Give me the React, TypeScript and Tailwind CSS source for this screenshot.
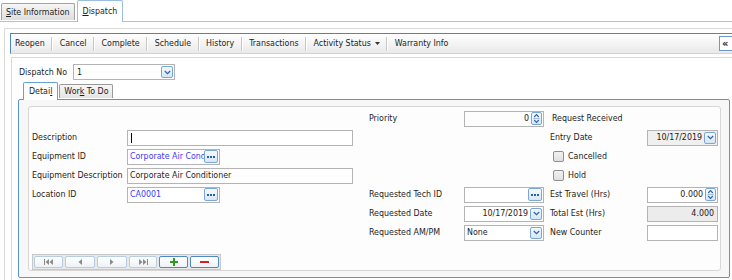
import React from 'react';

const Chevron = () => (
  <svg width="7" height="5" viewBox="0 0 7 5">
    <path d="M0.8 1 L3.5 3.7 L6.2 1" stroke="#2a63a8" strokeWidth="1.2" fill="none" />
  </svg>
);

const DropBtn = () => (
  <div className="w-[12px] h-[12px] shrink-0 rounded-[2px] border border-[#7aa7d6] bg-gradient-to-b from-[#f4f8fc] to-[#d6e6f6] flex items-center justify-center">
    <Chevron />
  </div>
);

const EllBtn = () => (
  <div className="w-[14px] h-[13px] shrink-0 rounded-[2px] border border-[#7aa7d6] bg-gradient-to-b from-[#f6f9fd] to-[#d8e7f7] flex items-center justify-center gap-[1px]">
    <span className="w-[2px] h-[2px] bg-[#2b5fa6]" />
    <span className="w-[2px] h-[2px] bg-[#2b5fa6]" />
    <span className="w-[2px] h-[2px] bg-[#2b5fa6]" />
  </div>
);

const SpinBtn = () => (
  <div className="w-[11px] h-[13px] shrink-0 rounded-[2px] border border-[#7aa7d6] bg-gradient-to-b from-[#f6f9fd] to-[#d8e7f7] flex flex-col items-center justify-center">
    <svg width="7" height="11" viewBox="0 0 7 11">
      <path d="M1.2 4 L3.5 1.6 L5.8 4" stroke="#2a63a8" strokeWidth="1.1" fill="none" />
      <path d="M0.5 5.5 H6.5" stroke="#9dbbe0" strokeWidth="1" />
      <path d="M1.2 7 L3.5 9.4 L5.8 7" stroke="#2a63a8" strokeWidth="1.1" fill="none" />
    </svg>
  </div>
);

const Box = ({
  className = '',
  children,
}: {
  className?: string;
  children?: React.ReactNode;
}) => (
  <div
    className={`h-[16px] self-center border border-[#b4b4b4] flex items-center pl-[2px] pr-[1px] overflow-hidden whitespace-nowrap ${className}`}
  >
    {children}
  </div>
);

const Label = ({ className = '', children }: { className?: string; children: React.ReactNode }) => (
  <div className={`self-center whitespace-nowrap ${className}`}>{children}</div>
);

const Check = ({ label, row }: { label: string; row: string }) => (
  <div className={`col-start-7 col-span-2 ${row} self-center flex items-center gap-[4px] ml-[3px]`}>
    <div className="w-[11px] h-[11px] rounded-[2px] border border-[#8f8f8f] bg-gradient-to-b from-[#f2f2f2] to-[#e0e0e0]" />
    <span>{label}</span>
  </div>
);

const NavIcon = ({ kind }: { kind: 'first' | 'prev' | 'next' | 'last' }) => {
  const c = '#8a8a8a';
  if (kind === 'first')
    return (
      <svg width="9" height="6" viewBox="0 0 9 6">
        <rect x="0" y="0" width="1" height="6" fill={c} />
        <path d="M5 0 L5 6 L1.5 3 Z" fill={c} />
        <path d="M9 0 L9 6 L5.5 3 Z" fill={c} />
      </svg>
    );
  if (kind === 'last')
    return (
      <svg width="9" height="6" viewBox="0 0 9 6">
        <path d="M0 0 L0 6 L3.5 3 Z" fill={c} />
        <path d="M4 0 L4 6 L7.5 3 Z" fill={c} />
        <rect x="8" y="0" width="1" height="6" fill={c} />
      </svg>
    );
  if (kind === 'prev')
    return (
      <svg width="4" height="6" viewBox="0 0 4 6">
        <path d="M4 0 L4 6 L0.5 3 Z" fill={c} />
      </svg>
    );
  return (
    <svg width="4" height="6" viewBox="0 0 4 6">
      <path d="M0 0 L0 6 L3.5 3 Z" fill={c} />
    </svg>
  );
};

const NavBtn = ({ children, strong = false }: { children: React.ReactNode; strong?: boolean }) => (
  <div
    className={`h-[12px] rounded-[2px] border flex items-center justify-center bg-gradient-to-b from-white to-[#eef2f6] ${
      strong ? 'border-[#4f88c2]' : 'border-[#b6cde4]'
    }`}
  >
    {children}
  </div>
);

const Sep = () => <div className="w-[2px] h-[14px] border-l border-[#c8c8c8] border-r border-r-white mx-[6.5px]" />;

export default function App() {
  const toolbar = ['Reopen', 'Cancel', 'Complete', 'Schedule', 'History', 'Transactions'];

  return (
    <div className="w-[732px] h-[280px] overflow-hidden bg-white text-[8.8px] leading-none text-[#1c1c1c] font-['DejaVu_Sans_Condensed','Liberation_Sans',Arial,sans-serif]">
      {/* top tabs */}
      <div className="flex items-end h-[22px] border-b border-[#a9c4e2] pl-[1px]">
        <div className="h-[17px] mb-px px-[4px] border border-b-0 border-[#a3a3a3] rounded-t-[2px] bg-gradient-to-b from-[#f6f6f6] to-[#dedede] flex items-center">
          <span>
            <span className="underline">S</span>ite Information
          </span>
        </div>
        <div className="relative -mb-px ml-[2px] h-[22px] px-[5px] border border-b-0 border-[#9dbde0] rounded-t-[2px] bg-white flex items-center">
          <span>
            <span className="underline">D</span>ispatch
          </span>
        </div>
      </div>

      {/* outer panel */}
      <div className="mt-[6px] ml-[4px] border-l border-t border-[#d9d9d9] h-[252px]">
        {/* toolbar */}
        <div className="mt-[4px] ml-[5px] h-[21px] border-t border-l border-[#4a86c5] border-b border-b-[#d4d4d4] bg-gradient-to-b from-white to-[#e9e9e9] flex items-center pl-[4px]">
          {toolbar.map((t) => (
            <React.Fragment key={t}>
              <span>{t}</span>
              <Sep />
            </React.Fragment>
          ))}
          <span>Activity Status</span>
          <svg width="5" height="3" viewBox="0 0 5 3" className="ml-[4px]">
            <path d="M0 0 H5 L2.5 3 Z" fill="#333" />
          </svg>
          <Sep />
          <span>Warranty Info</span>
          <div className="ml-auto h-[15px] w-[13px] border border-r-0 border-[#6f97c4] bg-white flex items-center pl-[2px] font-bold text-[11px]">
            «
          </div>
        </div>

        {/* inner panel */}
        <div className="mt-[3px] ml-[6px] border-l border-t border-[#d9d9d9] h-[230px]">
          <div className="flex items-center mt-[6px] pl-[7px] h-[16px]">
            <div className="w-[54px]">Dispatch No</div>
            <div className="w-[102px] h-[16px] border border-[#b4b4b4] flex items-center pl-[3px] pr-[1px]">
              <span className="flex-1">1</span>
              <DropBtn />
            </div>
          </div>

          {/* sub tabs */}
          <div className="mt-[2px] ml-[11px] h-[17px] flex items-end">
            <div className="relative z-10 -mb-px h-[18px] px-[5px] border border-b-0 border-[#6a9fd4] rounded-t-[2px] bg-white flex items-center">
              <span>
                Detai<span className="underline">l</span>
              </span>
            </div>
            <div className="ml-px h-[14px] mb-px px-[4px] border border-b-0 border-[#9a9a9a] rounded-t-[2px] bg-gradient-to-b from-[#f7f7f7] to-[#e4e4e4] flex items-center">
              <span>
                Wor<span className="underline">k</span> To Do
              </span>
            </div>
          </div>

          {/* tab content */}
          <div className="ml-[6px] mr-[2px] h-[179px] border border-[#5b95cf] rounded-[2px] bg-[#f7f7f7] pt-[6px] pl-[9px] pr-[8px]">
            <div className="h-[165px] border border-[#d6d6d6] rounded-[3px] bg-[#fdfdfd] pt-[2px] pl-[3px]">
              <div className="grid grid-cols-[95px_226px_16px_95px_80px_6px_97px_71px] grid-rows-[repeat(7,19px)]">
                {/* row 1 */}
                <Label className="col-start-4 row-start-1">Priority</Label>
                <Box className="col-start-5 row-start-1 justify-end">
                  <span className="mr-[2px]">0</span>
                  <SpinBtn />
                </Box>
                <Label className="col-start-7 col-span-2 row-start-1 ml-[2px]">Request Received</Label>

                {/* row 2 */}
                <Label className="col-start-1 row-start-2">Description</Label>
                <Box className="col-start-2 row-start-2 bg-white">
                  <span className="ml-px w-px h-[10px] bg-black" />
                </Box>
                <Label className="col-start-7 row-start-2">Entry Date</Label>
                <Box className="col-start-8 row-start-2 bg-[#f0f0f0] justify-end">
                  <span className="mr-[2px]">10/17/2019</span>
                  <DropBtn />
                </Box>

                {/* row 3 */}
                <Label className="col-start-1 row-start-3">Equipment ID</Label>
                <Box className="col-start-2 row-start-3 w-[93px] bg-white">
                  <span className="flex-1 overflow-hidden text-[#3b3bf0]">Corporate Air Conditioner</span>
                  <EllBtn />
                </Box>
                <Check label="Cancelled" row="row-start-3" />

                {/* row 4 */}
                <Label className="col-start-1 row-start-4">Equipment Description</Label>
                <Box className="col-start-2 row-start-4 bg-white">Corporate Air Conditioner</Box>
                <Check label="Hold" row="row-start-4" />

                {/* row 5 */}
                <Label className="col-start-1 row-start-5">Location ID</Label>
                <Box className="col-start-2 row-start-5 w-[93px] bg-white">
                  <span className="flex-1 text-[#3b3bf0]">CA0001</span>
                  <EllBtn />
                </Box>
                <Label className="col-start-4 row-start-5">Requested Tech ID</Label>
                <Box className="col-start-5 row-start-5 bg-white justify-end">
                  <EllBtn />
                </Box>
                <Label className="col-start-7 row-start-5">Est Travel (Hrs)</Label>
                <Box className="col-start-8 row-start-5 bg-white justify-end">
                  <span className="mr-[2px]">0.000</span>
                  <SpinBtn />
                </Box>

                {/* row 6 */}
                <Label className="col-start-4 row-start-6">Requested Date</Label>
                <Box className="col-start-5 row-start-6 bg-white justify-end">
                  <span className="mr-[2px]">10/17/2019</span>
                  <DropBtn />
                </Box>
                <Label className="col-start-7 row-start-6">Total Est (Hrs)</Label>
                <Box className="col-start-8 row-start-6 bg-[#ececec] justify-end">
                  <span className="mr-[2px]">4.000</span>
                </Box>

                {/* row 7 */}
                <Label className="col-start-4 row-start-7">Requested AM/PM</Label>
                <Box className="col-start-5 row-start-7 bg-white">
                  <span className="flex-1">None</span>
                  <DropBtn />
                </Box>
                <Label className="col-start-7 row-start-7">New Counter</Label>
                <Box className="col-start-8 row-start-7 bg-white" />
              </div>

              {/* navigator */}
              <div className="mt-[12px] w-[189px] h-[16px] border border-[#c8c8c8] bg-[#e9e9e9] grid grid-cols-[29px_30px_30px_28px_29px_29px] gap-[2px] items-center pl-px">
                <NavBtn>
                  <NavIcon kind="first" />
                </NavBtn>
                <NavBtn>
                  <NavIcon kind="prev" />
                </NavBtn>
                <NavBtn>
                  <NavIcon kind="next" />
                </NavBtn>
                <NavBtn>
                  <NavIcon kind="last" />
                </NavBtn>
                <NavBtn strong>
                  <svg width="8" height="8" viewBox="0 0 8 8">
                    <rect x="3" y="0" width="2" height="8" fill="#2f9a1f" />
                    <rect x="0" y="3" width="8" height="2" fill="#2f9a1f" />
                  </svg>
                </NavBtn>
                <NavBtn strong>
                  <svg width="9" height="2" viewBox="0 0 9 2">
                    <rect x="0" y="0" width="9" height="2" fill="#d62020" />
                  </svg>
                </NavBtn>
              </div>
            </div>
          </div>
        </div>
      </div>
    </div>
  );
}
